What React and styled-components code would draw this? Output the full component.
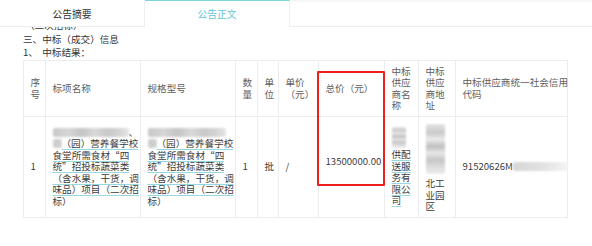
import React from "react";
import styled, { createGlobalStyle } from "styled-components";

const GlobalStyle = createGlobalStyle`
  body {
    margin: 0;
    background: #ffffff;
    font-family: "Noto Sans CJK SC", "Noto Sans", sans-serif;
    font-size: 9.6px;
    color: #333333;
  }
`;

const TabBar = styled.nav`
  display: flex;
  height: 26px;
  border-bottom: 1px solid #eeeeee;
  box-shadow: inset 0 3px 3px -2px rgba(0, 0, 0, 0.07);
`;

const Tab = styled.div`
  width: ${(p) => p.$width}px;
  display: flex;
  align-items: center;
  justify-content: center;
  font-size: 9.8px;
  color: ${(p) => (p.$active ? "#67c6d6" : "#333333")};
  background: #ffffff;
  border-right: 1px solid #eeeeee;
  border-top: 1px solid ${(p) => (p.$active ? "#7dd3e0" : "transparent")};
  margin-bottom: ${(p) => (p.$active ? "-1px" : "0")};
  box-sizing: border-box;
`;

const Content = styled.main`
  overflow: hidden;
  padding: 0 25px 0 23px;
`;

const Line = styled.p`
  margin: 0;
  line-height: 13px;
  white-space: nowrap;
  color: #333333;
`;

const ClippedLine = styled(Line)`
  margin-top: -9px;
  line-height: 15px;
  padding-left: 2px;
`;

const TableWrap = styled.div`
  position: relative;
  margin-top: 1px;
`;

const Table = styled.table`
  width: 544px;
  table-layout: fixed;
  border-collapse: collapse;
`;

const Cell = styled.td`
  border: 1px solid #ededed;
  padding: 4px 1px 4px 6.5px;
  vertical-align: middle;
  line-height: 11.5px;
  white-space: nowrap;
  color: ${(p) => (p.$head ? "#5e5e5e" : "#3c3c3c")};
  height: ${(p) => p.$height}px;
  box-sizing: border-box;
`;

const Linked = styled.span`
  text-decoration: underline;
  text-decoration-color: #93d8e4;
  text-underline-offset: 2px;
`;

const Blob = styled.span`
  display: ${(p) => (p.$block ? "block" : "inline-block")};
  width: ${(p) => p.$w}px;
  height: ${(p) => p.$h || 9}px;
  margin: ${(p) => p.$m || "0"};
  vertical-align: -1px;
  border-radius: 2px;
  background: ${(p) =>
    p.$tall
      ? "linear-gradient(180deg, #e4e4e4 0%, #c9c9c9 18%, #ececec 30%, #bfbfbf 45%, #e8e8e8 58%, #c6c6c6 72%, #dcdcdc 86%, #ededed 100%)"
      : p.$fade
      ? "linear-gradient(90deg, #d6d6d6 0%, #e2e2e2 55%, #f4f4f4 100%)"
      : "linear-gradient(90deg, #c8c8c8 0%, #d6d6d6 20%, #c4c4c4 38%, #d9d9d9 55%, #c9c9c9 72%, #d4d4d4 88%, #e6e6e6 100%)"};
  filter: blur(0.9px);
`;

const Amount = styled.div`
  margin-bottom: 10px;
`;

const RedMark = styled.div`
  position: absolute;
  left: 294px;
  top: 11px;
  width: 68px;
  height: 115px;
  border: 2px solid #f01d1d;
  border-radius: 1px;
  box-sizing: border-box;
  pointer-events: none;
`;

const columns = [22, 95, 95, 22, 21, 40, 66, 34, 37, 112];

const ItemName = ({ tail }) => (
  <>
    <Blob $w={tail ? 76 : 78} />
    {tail && "、"}
    <br />
    <Blob $w={9} />
    <Linked>
      （园）营养餐学校
      <br />
      食堂所需食材“四
      <br />
      统”招投标蔬菜类
      <br />
      （含水果，干货，调
      <br />
      味品）项目（二次招
    </Linked>
    <br />
    标）
  </>
);

const App = () => (
  <>
    <GlobalStyle />
    <TabBar>
      <Tab $width={145}>公告摘要</Tab>
      <Tab $width={145} $active>
        公告正文
      </Tab>
    </TabBar>
    <Content>
      <ClippedLine>（二次招标）</ClippedLine>
      <Line>三、中标（成交）信息</Line>
      <Line>1、&nbsp;&nbsp;中标结果：</Line>
      <TableWrap>
        <Table>
          <colgroup>
            {columns.map((w, i) => (
              <col key={i} style={{ width: w }} />
            ))}
          </colgroup>
          <tbody>
            <tr>
              <Cell $head $height={56}>
                序<br />号
              </Cell>
              <Cell $head>标项名称</Cell>
              <Cell $head>规格型号</Cell>
              <Cell $head>
                数<br />量
              </Cell>
              <Cell $head>
                单<br />位
              </Cell>
              <Cell $head>
                单价
                <br />
                （元）
              </Cell>
              <Cell $head>总价（元）</Cell>
              <Cell $head>
                中标
                <br />
                供应
                <br />
                商名
                <br />
                称
              </Cell>
              <Cell $head>
                中标
                <br />
                供应
                <br />
                商地
                <br />
                址
              </Cell>
              <Cell $head>
                中标供应商统一社会信用
                <br />
                代码
              </Cell>
            </tr>
            <tr>
              <Cell $height={99}>1</Cell>
              <Cell>
                <ItemName tail />
              </Cell>
              <Cell>
                <ItemName />
              </Cell>
              <Cell>1</Cell>
              <Cell>批</Cell>
              <Cell>/</Cell>
              <Cell>
                <Amount>13500000.00</Amount>
              </Cell>
              <Cell>
                <Blob $block $w={14} $h={21} $m="0 0 1px 0" $tall />
                <Linked>
                  供配
                  <br />
                  送服
                  <br />
                  务有
                  <br />
                  限公
                  <br />
                  司
                </Linked>
              </Cell>
              <Cell>
                <Blob $block $w={19} $h={50} $m="3px 0 4px 0" $tall />
                北工
                <br />
                业园
                <br />
                区
              </Cell>
              <Cell>
                91520626M
                <Blob $w={55} $fade />
              </Cell>
            </tr>
          </tbody>
        </Table>
        <RedMark />
      </TableWrap>
    </Content>
  </>
);

export default App;
